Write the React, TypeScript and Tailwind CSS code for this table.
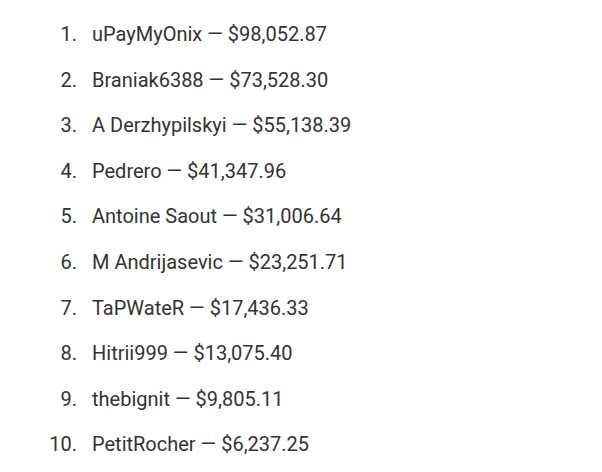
import React from 'react';

const rows = [
  ['uPayMyOnix', '$98,052.87'],
  ['Braniak6388', '$73,528.30'],
  ['A Derzhypilskyi', '$55,138.39'],
  ['Pedrero', '$41,347.96'],
  ['Antoine Saout', '$31,006.64'],
  ['M Andrijasevic', '$23,251.71'],
  ['TaPWateR', '$17,436.33'],
  ['Hitrii999', '$13,075.40'],
  ['thebignit', '$9,805.11'],
  ['PetitRocher', '$6,237.25'],
];

export default function App() {
  return (
    <div className="w-[602px] h-[472px] bg-white overflow-hidden">
      <ol className="pt-[12px] text-[20px] leading-[45.6px] text-[#333333] font-['Roboto',sans-serif]">
        {rows.map(([name, amount], i) => (
          <li key={name} className="flex">
            <span className="w-[77px] text-right">{i + 1}.</span>
            <span className="ml-[15px]">
              {name} — {amount}
            </span>
          </li>
        ))}
      </ol>
    </div>
  );
}
